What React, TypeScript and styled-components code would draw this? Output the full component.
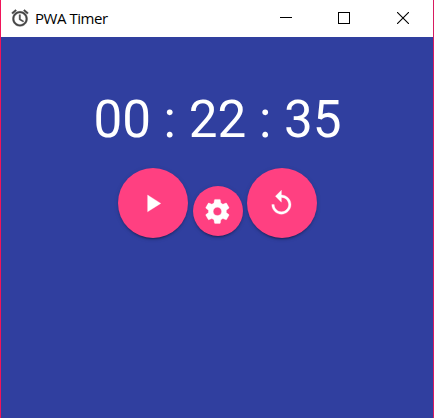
import React from "react";
import styled, { createGlobalStyle } from "styled-components";

const GlobalStyle = createGlobalStyle`
  body { margin: 0; background: #303f9f; }
  *, *::before, *::after { box-sizing: border-box; }
`;

const AppWindow = styled.div`
  display: flex;
  flex-direction: column;
  width: 434px;
  height: 418px;
  overflow: hidden;
  background: #303f9f;
  border-left: 1px solid #f0145a;
  border-right: 1px solid #d81b60;
`;

const TitleBar = styled.header`
  display: flex;
  align-items: flex-start;
  height: 37px;
  flex: none;
  padding-left: 9px;
  background: #fff;
`;

const AlarmIcon = styled.svg`
  width: 20px;
  height: 20px;
  margin-top: 8px;
  fill: #444;
  stroke: #444;
  stroke-width: 0.5px;
`;

const Title = styled.h1`
  flex: 1;
  margin: 8px 0 0 5px;
  font: 400 15px/20px "Open Sans", "Noto Sans", sans-serif;
  letter-spacing: -0.45px;
  color: #000;
`;

const WindowButton = styled.button<{ $width?: number }>`
  display: flex;
  align-items: center;
  justify-content: center;
  width: ${(p) => p.$width ?? 58}px;
  height: 36px;
  padding: 0;
  border: 0;
  background: none;
`;

const Content = styled.main`
  display: flex;
  flex-direction: column;
  align-items: center;
  padding: 53px 0 0 1px;
`;

const Time = styled.div`
  font: 400 51.2px/60px Roboto, sans-serif;
  color: #fff;
  white-space: pre;
`;

const Controls = styled.div`
  display: flex;
  align-items: flex-start;
  margin-top: 18px;
`;

const RoundButton = styled.button<{ $small?: boolean }>`
  display: flex;
  align-items: center;
  justify-content: center;
  width: ${(p) => (p.$small ? 50 : 70)}px;
  height: ${(p) => (p.$small ? 50 : 70)}px;
  margin: ${(p) => (p.$small ? "18px 4px 0 5px" : "0")};
  padding: 0 1.4px 0 0;
  border: 0;
  border-radius: 50%;
  background: #ff4081;
  color: #fff;
  box-shadow: 0 2px 2px 0 rgba(0, 0, 0, 0.14), 0 3px 1px -2px rgba(0, 0, 0, 0.2),
    0 1px 5px 0 rgba(0, 0, 0, 0.12);
`;

const Icon = styled.svg`
  display: block;
  flex: none;
  width: 28.8px;
  height: 28.8px;
  fill: currentColor;
  stroke: currentColor;
  stroke-width: 0.25px;
`;

export default function App() {
  return (
    <>
      <GlobalStyle />
      <AppWindow>
        <TitleBar>
          <AlarmIcon viewBox="0 0 24 24">
            <path d="M22 5.72l-4.6-3.86-1.29 1.53 4.6 3.86L22 5.72zM7.88 3.39L6.6 1.86 2 5.71l1.29 1.53 4.59-3.85zM12.5 8H11v6l4.75 2.85.75-1.23-4-2.37V8zM12 4c-4.97 0-9 4.03-9 9s4.02 9 9 9c4.97 0 9-4.03 9-9s-4.03-9-9-9zm0 16c-3.87 0-7-3.13-7-7s3.13-7 7-7 7 3.13 7 7-3.13 7-7 7z" />
          </AlarmIcon>
          <Title>PWA Timer</Title>
          <WindowButton aria-label="Minimize">
            <svg width="12" height="12" shapeRendering="crispEdges"><path d="M0 5h12v1H0z" /></svg>
          </WindowButton>
          <WindowButton aria-label="Maximize">
            <svg width="12" height="12" shapeRendering="crispEdges"><path d="M.5.5h11v11H.5z" fill="none" stroke="#000" /></svg>
          </WindowButton>
          <WindowButton $width={60} aria-label="Close">
            <svg width="12" height="12"><path d="M0 0l12 12M12 0L0 12" fill="none" stroke="#000" strokeWidth="1.1" /></svg>
          </WindowButton>
        </TitleBar>
        <Content>
          <Time>00 : 22 : 35</Time>
          <Controls>
            <RoundButton aria-label="Start">
              <Icon viewBox="0 0 24 24"><path d="M8 5v14l11-7z" /></Icon>
            </RoundButton>
            <RoundButton $small aria-label="Settings">
              <Icon viewBox="0 0 24 24">
                <path d="M19.43 12.98c.04-.32.07-.64.07-.98s-.03-.66-.07-.98l2.11-1.65c.19-.15.24-.42.12-.64l-2-3.46c-.12-.22-.39-.3-.61-.22l-2.49 1c-.52-.4-1.08-.73-1.69-.98l-.38-2.65C14.46 2.18 14.25 2 14 2h-4c-.25 0-.46.18-.49.42l-.38 2.65c-.61.25-1.17.59-1.69.98l-2.49-1c-.23-.09-.49 0-.61.22l-2 3.46c-.13.22-.07.49.12.64l2.11 1.65c-.04.32-.07.65-.07.98s.03.66.07.98l-2.11 1.65c-.19.15-.24.42-.12.64l2 3.46c.12.22.39.3.61.22l2.49-1c.52.4 1.08.73 1.69.98l.38 2.65c.03.24.24.42.49.42h4c.25 0 .46-.18.49-.42l.38-2.65c.61-.25 1.17-.59 1.69-.98l2.49 1c.23.09.49 0 .61-.22l2-3.46c.12-.22.07-.49-.12-.64l-2.11-1.65zM12 15.5c-1.93 0-3.5-1.57-3.5-3.5s1.57-3.5 3.5-3.5 3.5 1.57 3.5 3.5-1.57 3.5-3.5 3.5z" />
              </Icon>
            </RoundButton>
            <RoundButton aria-label="Reset">
              <Icon viewBox="0 0 24 24">
                <path d="M12 5V1L7 6l5 5V7c3.31 0 6 2.69 6 6s-2.69 6-6 6-6-2.69-6-6H4c0 4.42 3.58 8 8 8s8-3.58 8-8-3.58-8-8-8z" />
              </Icon>
            </RoundButton>
          </Controls>
        </Content>
      </AppWindow>
    </>
  );
}
